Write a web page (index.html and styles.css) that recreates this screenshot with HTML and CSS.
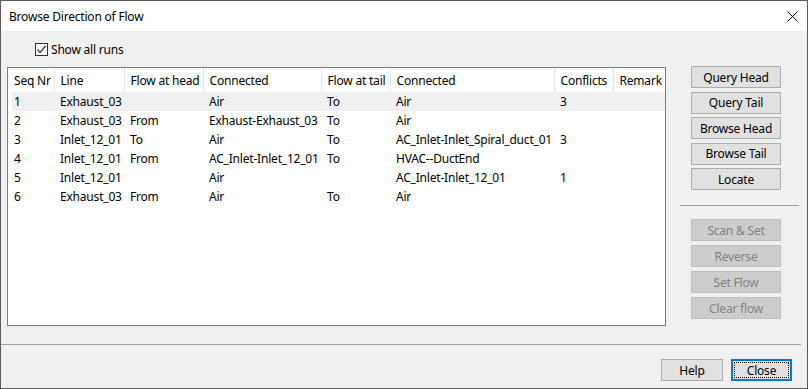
FILE: index.html
```html
<!DOCTYPE html>
<html lang="en">
<head>
    <meta charset="UTF-8">
    <title>Browse Direction of Flow</title>
    <link rel="stylesheet" href="styles.css">
</head>
<body>
    <div class="window">
        <div class="titlebar">
            <span class="title">Browse Direction of Flow</span>
            <svg class="close" width="11" height="11" viewBox="0 0 11 11">
                <path d="M0.5 0.5 L10.5 10.5 M10.5 0.5 L0.5 10.5" stroke="#000" stroke-width="1" fill="none"/>
            </svg>
        </div>
        <div class="main">
            <div class="left">
                <label class="check">
                    <span class="box">
                        <svg width="11" height="11" viewBox="0 0 11 11">
                            <path d="M1.5 5.5 L4 8.5 L9.5 2" stroke="#333" stroke-width="1.2" fill="none"/>
                        </svg>
                    </span>
                    <span>Show all runs</span>
                </label>
                <div class="list">
                    <table>
                        <colgroup>
                            <col style="width: 46px">
                            <col style="width: 70px">
                            <col style="width: 79px">
                            <col style="width: 118px">
                            <col style="width: 69px">
                            <col style="width: 164px">
                            <col style="width: 59px">
                            <col style="width: 52px">
                        </colgroup>
                        <thead>
                            <tr>
                                <th>Seq Nr</th>
                                <th>Line</th>
                                <th>Flow at head</th>
                                <th>Connected</th>
                                <th>Flow at tail</th>
                                <th>Connected</th>
                                <th>Conflicts</th>
                                <th>Remark</th>
                            </tr>
                        </thead>
                        <tbody>
                            <tr class="selected">
                                <td>1</td><td>Exhaust_03</td><td></td><td>Air</td><td>To</td><td>Air</td><td>3</td><td></td>
                            </tr>
                            <tr>
                                <td>2</td><td>Exhaust_03</td><td>From</td><td>Exhaust-Exhaust_03</td><td>To</td><td>Air</td><td></td><td></td>
                            </tr>
                            <tr>
                                <td>3</td><td>Inlet_12_01</td><td>To</td><td>Air</td><td>To</td><td>AC_Inlet-Inlet_Spiral_duct_01</td><td>3</td><td></td>
                            </tr>
                            <tr>
                                <td>4</td><td>Inlet_12_01</td><td>From</td><td>AC_Inlet-Inlet_12_01</td><td>To</td><td>HVAC--DuctEnd</td><td></td><td></td>
                            </tr>
                            <tr>
                                <td>5</td><td>Inlet_12_01</td><td></td><td>Air</td><td></td><td>AC_Inlet-Inlet_12_01</td><td>1</td><td></td>
                            </tr>
                            <tr>
                                <td>6</td><td>Exhaust_03</td><td>From</td><td>Air</td><td>To</td><td>Air</td><td></td><td></td>
                            </tr>
                        </tbody>
                    </table>
                </div>
            </div>
            <div class="side">
                <div class="group">
                    <button class="btn">Query Head</button>
                    <button class="btn">Query Tail</button>
                    <button class="btn">Browse Head</button>
                    <button class="btn">Browse Tail</button>
                    <button class="btn">Locate</button>
                </div>
                <div class="rule"></div>
                <div class="group lower">
                    <button class="btn" disabled>Scan &amp; Set</button>
                    <button class="btn" disabled>Reverse</button>
                    <button class="btn" disabled>Set Flow</button>
                    <button class="btn" disabled>Clear flow</button>
                </div>
            </div>
        </div>
        <div class="rule wide"></div>
        <div class="footer">
            <button class="btn help">Help</button>
            <button class="btn default">Close</button>
        </div>
    </div>
</body>
</html>
```

FILE: styles.css
```css
* {
    box-sizing: border-box;
}
body {
    margin: 0;
    font-family: "Segoe UI", "Noto Sans", sans-serif;
    font-size: 12px;
    letter-spacing: -0.2px;
    color: #000;
}
.window {
    width: 808px;
    height: 389px;
    border: 1px solid #5a5a5a;
    background-color: #f0f0f0;
    display: flex;
    flex-direction: column;
}
.titlebar {
    height: 30px;
    background-color: #fff;
    display: flex;
    align-items: center;
    padding-left: 8px;
}
.close {
    margin-left: auto;
    margin-right: 9px;
}
.main {
    display: flex;
    height: 313px;
}
.left {
    width: 679px;
    padding-left: 6px;
}
.check {
    display: flex;
    align-items: center;
    height: 13px;
    margin-top: 12px;
    margin-left: 28px;
}
.box {
    width: 13px;
    height: 13px;
    border: 1px solid #333;
    background-color: #fff;
    display: flex;
    align-items: center;
    justify-content: center;
    margin-right: 3px;
}
.list {
    margin-top: 11px;
    width: 659px;
    height: 259px;
    border: 1px solid #7a7a7a;
    background-color: #fff;
    overflow: hidden;
}
table {
    border-collapse: collapse;
    table-layout: fixed;
    width: 657px;
}
th {
    height: 24px;
    font-weight: normal;
    text-align: left;
    padding: 0 6px;
    border-right: 1px solid #e5e5e5;
    white-space: nowrap;
    overflow: hidden;
}
th:last-child {
    border-right: none;
}
td {
    height: 19px;
    padding: 0 6px;
    white-space: nowrap;
    overflow: hidden;
}
.selected td {
    background-color: #f0f0f0;
}
.selected td:first-child {
    background: linear-gradient(to right, #fff 4px, #f0f0f0 4px);
}
.side {
    width: 120px;
    padding-top: 35px;
}
.group {
    display: flex;
    flex-direction: column;
    gap: 3.5px;
    padding-left: 11px;
}
.group.lower {
    gap: 4px;
    margin-top: 13px;
}
.btn {
    width: 90px;
    height: 22px;
    border: 1px solid #adadad;
    background-color: #e1e1e1;
    font-family: inherit;
    font-size: 12px;
    letter-spacing: -0.2px;
    color: #000;
    padding: 0;
}
.btn:disabled {
    background-color: #cccccc;
    border-color: #bfbfbf;
    color: #838383;
}
.rule {
    height: 1px;
    background-color: #a0a0a0;
    margin-top: 15px;
    width: 119px;
}
.rule.wide {
    width: 800px;
    margin-top: 0;
}
.footer {
    display: flex;
    justify-content: flex-end;
    gap: 8px;
    padding-top: 14px;
    padding-right: 15px;
}
.help {
    width: 62px;
}
.default {
    width: 61px;
    border: 2px solid #0078d7;
    outline: 1px dotted #000;
    outline-offset: -4px;
}
```
